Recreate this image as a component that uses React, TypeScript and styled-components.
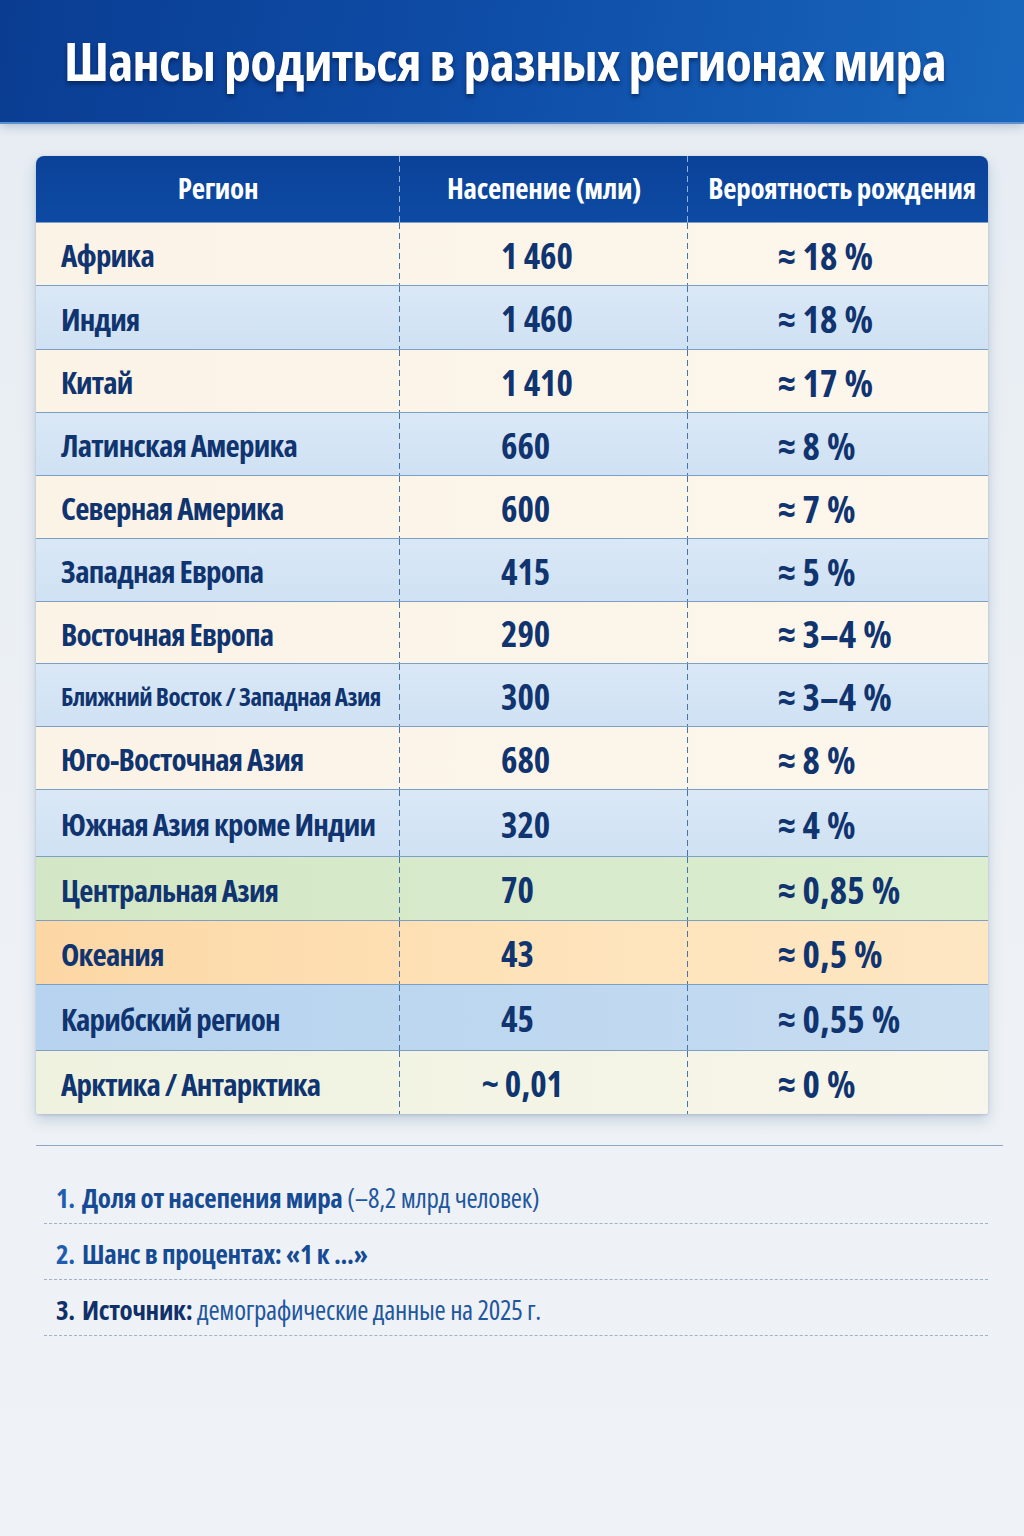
import React from 'react';
import styled, { createGlobalStyle } from 'styled-components';

const FONT = `"Open Sans", "Noto Sans", sans-serif`;

const Global = createGlobalStyle`
  html, body { margin: 0; padding: 0; }
  body {
    background: linear-gradient(180deg, #e6ecf2 0%, #edf1f5 60%, #eff2f6 100%);
    font-family: ${FONT};
    font-stretch: condensed;
  }
`;

const Page = styled.div`
  width: 1024px;
  min-height: 1536px;
  display: flex;
  flex-direction: column;
  font-stretch: condensed;
`;

const Banner = styled.header`
  height: 122px;
  display: flex;
  align-items: center;
  justify-content: center;
  padding-right: 14px;
  background: linear-gradient(100deg, #0a3d92 0%, #0e4ca6 45%, #1866bd 100%);
  box-shadow: 0 2px 0 #5d8fcf, 0 4px 10px rgba(10, 50, 110, 0.25);
`;

const Title = styled.h1`
  margin: 0 0 2px 0;
  color: #ffffff;
  font-family: ${FONT};
  font-stretch: condensed;
  font-weight: 700;
  font-size: 54px;
  letter-spacing: -0.8px;
  text-shadow: 0 3px 4px rgba(0, 20, 60, 0.55);
  white-space: nowrap;
`;

const Body = styled.main`
  padding: 34px 36px 0 36px;
  display: flex;
  flex-direction: column;
`;

const Table = styled.div`
  width: 952px;
  border-radius: 8px 8px 3px 3px;
  overflow: hidden;
  box-shadow: 0 6px 14px rgba(40, 80, 130, 0.22), 0 1px 3px rgba(40, 80, 130, 0.2);
`;

const Grid = `
  display: grid;
  grid-template-columns: 364px 288px 300px;
`;

const dashed = (color: string) =>
  `repeating-linear-gradient(180deg, ${color} 0 6px, transparent 6px 10px) right top / 1px 100% no-repeat`;

const HeadRow = styled.div`
  ${Grid};
  height: 66px;
  background: linear-gradient(180deg, #0b4299 0%, #0d4aa3 100%);
`;

const HeadCell = styled.div<{ $last?: boolean; $shift?: number }>`
  display: flex;
  align-items: center;
  justify-content: center;
  color: #ffffff;
  font-weight: 700;
  font-size: 29px;
  letter-spacing: -0.3px;
  padding-bottom: 4px;
  padding-left: ${(p) => p.$shift ?? 0}px;
  background: ${(p) => (p.$last ? 'none' : dashed('#8fb1de'))};
  white-space: nowrap;
`;

type Tone = 'cream' | 'blue' | 'green' | 'orange' | 'sky' | 'pale';

const tones: Record<Tone, string> = {
  cream: 'linear-gradient(90deg, #fbf3e6 0%, #fcf6ec 100%)',
  blue: 'linear-gradient(180deg, #dae8f6 0%, #cfe1f3 100%)',
  green: 'linear-gradient(90deg, #d3e7c6 0%, #dcedd0 100%)',
  orange: 'linear-gradient(90deg, #fcd7a4 0%, #fee4bc 60%, #fde6c2 100%)',
  sky: 'linear-gradient(90deg, #b6d3ef 0%, #c6dcf1 100%)',
  pale: 'linear-gradient(90deg, #eef2df 0%, #f8f6ea 100%)',
};

const Row = styled.div<{ $tone: Tone; $h: number }>`
  ${Grid};
  height: ${(p) => p.$h}px;
  background: ${(p) => tones[p.$tone]};
  border-top: 1.5px solid #7c9fc6;
  box-sizing: border-box;
`;

const Cell = styled.div<{ $pad: number; $last?: boolean; $size: number; $ls: number }>`
  display: flex;
  align-items: center;
  padding-left: ${(p) => p.$pad}px;
  padding-top: 2px;
  color: #10346f;
  font-weight: 700;
  font-size: ${(p) => p.$size}px;
  letter-spacing: ${(p) => p.$ls}px;
  background: ${(p) => (p.$last ? 'none' : dashed('#4674ab'))};
  white-space: nowrap;
`;

const Notes = styled.section`
  margin-top: 31px;
  width: 959px;
  border-top: 1.5px solid #8ea9c8;
  padding: 22px 0 0 8px;
  display: flex;
  flex-direction: column;
`;

const Note = styled.div`
  height: 56px;
  box-sizing: border-box;
  display: flex;
  align-items: center;
  padding-left: 12px;
  padding-top: 4px;
  width: 944px;
  border-bottom: 1px dashed #9fb2c8;
  font-size: 27px;
  letter-spacing: -0.3px;
  color: #1a4c92;
  white-space: nowrap;
`;

const Num = styled.span<{ $dark?: boolean }>`
  font-weight: 700;
  color: ${(p) => (p.$dark ? '#10306a' : '#1f5eae')};
  margin-right: 7px;
`;

const Strong = styled.span<{ $dark?: boolean }>`
  font-weight: 700;
  color: ${(p) => (p.$dark ? '#10306a' : '#164b93')};
`;

const Light = styled.span`
  font-weight: 400;
  color: #1f579e;
`;

type R = { name: string; pop: string; pct: string; tone: Tone; h: number; small?: boolean };

const rows: R[] = [
  { name: 'Африка', pop: '1 460', pct: '≈ 18 %', tone: 'cream', h: 63 },
  { name: 'Индия', pop: '1 460', pct: '≈ 18 %', tone: 'blue', h: 64 },
  { name: 'Китай', pop: '1 410', pct: '≈ 17 %', tone: 'cream', h: 63 },
  { name: 'Латинская Америка', pop: '660', pct: '≈ 8 %', tone: 'blue', h: 63 },
  { name: 'Северная Америка', pop: '600', pct: '≈ 7 %', tone: 'cream', h: 63 },
  { name: 'Западная Европа', pop: '415', pct: '≈ 5 %', tone: 'blue', h: 63 },
  { name: 'Восточная Европа', pop: '290', pct: '≈ 3–4 %', tone: 'cream', h: 62 },
  { name: 'Ближний Восток / Западная Азия', pop: '300', pct: '≈ 3–4 %', tone: 'blue', h: 63, small: true },
  { name: 'Юго-Восточная Азия', pop: '680', pct: '≈ 8 %', tone: 'cream', h: 63 },
  { name: 'Южная Азия кроме Индии', pop: '320', pct: '≈ 4 %', tone: 'blue', h: 67 },
  { name: 'Центральная Азия', pop: '70', pct: '≈ 0,85 %', tone: 'green', h: 64 },
  { name: 'Океания', pop: '43', pct: '≈ 0,5 %', tone: 'orange', h: 64 },
  { name: 'Карибский регион', pop: '45', pct: '≈ 0,55 %', tone: 'sky', h: 66 },
  { name: 'Арктика / Антарктика', pop: '~ 0,01', pct: '≈ 0 %', tone: 'pale', h: 64 },
];

export default function App() {
  return (
    <Page>
      <Global />
      <Banner>
        <Title>Шансы родиться в разных регионах мира</Title>
      </Banner>
      <Body>
        <Table>
          <HeadRow>
            <HeadCell>Регион</HeadCell>
            <HeadCell>Насепение (мли)</HeadCell>
            <HeadCell $last $shift={8}>Вероятность рождения</HeadCell>
          </HeadRow>
          {rows.map((r) => (
            <Row key={r.name} $tone={r.tone} $h={r.h}>
              <Cell $pad={25} $size={r.small ? 25 : 31} $ls={r.small ? -0.6 : -0.8}>
                {r.name}
              </Cell>
              <Cell $pad={r.pop.startsWith('~') ? 82 : 101} $size={35} $ls={0}>
                {r.pop}
              </Cell>
              <Cell $pad={90} $size={37} $ls={0.2} $last>
                {r.pct}
              </Cell>
            </Row>
          ))}
        </Table>
        <Notes>
          <Note>
            <Num>1.</Num>
            <Strong>Доля от насепения мира</Strong>
            <Light>&nbsp;(–8,2 млрд человек)</Light>
          </Note>
          <Note>
            <Num>2.</Num>
            <Strong>Шанс в процентах: «1 к ...»</Strong>
          </Note>
          <Note>
            <Num $dark>3.</Num>
            <Strong $dark>Источник:</Strong>
            <Light>&nbsp;демографические данные на 2025 г.</Light>
          </Note>
        </Notes>
      </Body>
    </Page>
  );
}
